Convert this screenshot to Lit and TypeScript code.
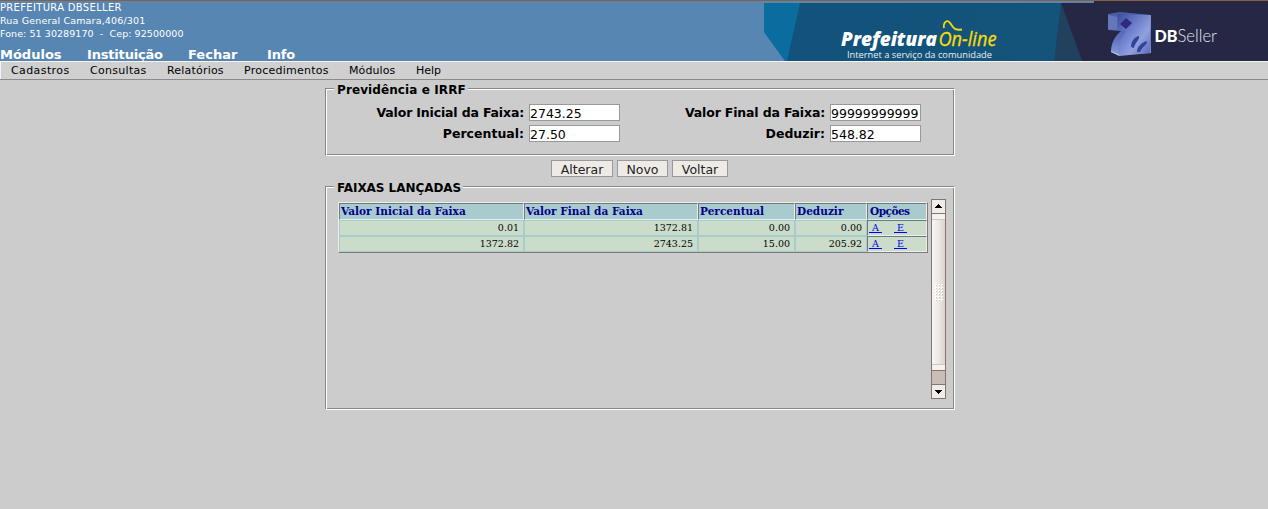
import { LitElement, html, css, svg } from "lit";
import { customElement, property } from "lit/decorators.js";

@customElement("brand-banner")
class BrandBanner extends LitElement {
  static styles = css`
    :host { display: block; width: 504px; height: 60px; }
    svg { display: block; }
    .sans { font-family: "Open Sans", "Noto Sans", sans-serif; }
    .round { font-family: Lato, sans-serif; }
  `;
  render() {
    return html`<svg width="504" height="60" viewBox="764 1 504 60">
      <defs>
        <linearGradient id="face" x1="0" y1="0" x2="1" y2="1">
          <stop offset="0" stop-color="#3d4a9c" />
          <stop offset="0.4" stop-color="#6f80cc" />
          <stop offset="0.65" stop-color="#90a1e0" />
          <stop offset="1" stop-color="#5666b6" />
        </linearGradient>
        <linearGradient id="side" x1="0" y1="0" x2="0" y2="1">
          <stop offset="0" stop-color="#4a5aab" />
          <stop offset="0.6" stop-color="#5f70be" />
          <stop offset="1" stop-color="#8d9ddd" />
        </linearGradient>
        <linearGradient id="mid" x1="0" x2="1">
          <stop offset="0" stop-color="#12527b" />
          <stop offset="0.85" stop-color="#14537a" />
          <stop offset="1" stop-color="#12587f" />
        </linearGradient>
      </defs>
      <rect x="764" y="3" width="330" height="58" fill="url(#mid)" />
      <path d="M764 3H800L787 61H785L764 32Z" fill="#0b6d9f" />
      <path d="M764 32L785 61H764Z" fill="#5786b3" />
      <path d="M1061 3L1082 61H1054Z" fill="#21415f" />
      <path d="M1061 3H1094V1H1268V61H1082Z" fill="#262745" />
      <text class="sans" x="841" y="45.700" font-size="19" font-weight="800" font-style="italic" fill="#fff"
        textLength="96" lengthAdjust="spacingAndGlyphs">Prefeitura</text>
      <text class="sans" x="938.5" y="45.700" font-size="19.500" font-style="italic" fill="#f5dc0b" stroke="#f5dc0b" stroke-width=".3"
        textLength="58" lengthAdjust="spacingAndGlyphs">On-line</text>
      <path d="M944 28C943 23 947 18.500 950 23C953 26 953 31 962 29.500" fill="none" stroke="#f0d80e" stroke-width="1.800" />
      <text class="sans" x="847" y="57.500" font-size="9.500" fill="#e9f0f5"
        textLength="145" lengthAdjust="spacingAndGlyphs">Internet a serviço da comunidade</text>
      <path d="M1108 14L1120 12L1151 15V53L1119 56L1111 52C1111 43 1115 36 1121 31L1108 30Z" fill="url(#side)" />
      <path d="M1118 14L1151 15L1150 53L1119 55C1117 46 1121 38 1126 31L1118 30Z" fill="url(#face)" />
      <path d="M1126 18L1132 23L1126 29L1120 24Z" fill="#2f2a80" />
      <path d="M1108 15L1117 17V30L1108 29Z" fill="#6676bb" />
      <path d="M1131 47C1131 42 1134 37 1139 36C1140 40 1135 42 1134 48ZM1137 52C1137 47 1141 43 1147 41C1147 46 1142 46 1140 52Z" fill="#34439a" />
      <path d="M1111 51.500L1119 55" stroke="#bac4f4" stroke-width="1" />
      <text class="round" x="1154.500" y="42" font-size="17" font-weight="900" fill="#fff"
        textLength="23" lengthAdjust="spacingAndGlyphs">DB</text>
      <text class="round" x="1177.500" y="42" font-size="17.500" font-weight="300" fill="#e3e3ef"
        textLength="39.500" lengthAdjust="spacingAndGlyphs">Seller</text>
    </svg>`;
  }
}

@customElement("scroll-bar")
class ScrollBar extends LitElement {
  static styles = css`
    :host { display: flex; flex-direction: column; box-sizing: border-box; width: 15px; height: 200px;
      border: 1px solid #82756d; background: #c9beb5; }
    .btn { height: 14px; box-sizing: border-box; background: #f0ece8; }
    .up { border-bottom: 1px solid #82756d; }
    .down { border-top: 1px solid #82756d; }
    .thumb { height: 157px; box-sizing: border-box; border-bottom: 1px solid #82756d;
      background: linear-gradient(90deg, #f8f6f4, #ece8e4 50%, #dbd4cd); }
    .track { flex: 1; }
    svg { display: block; }
  `;
  render() {
    const dots = [];
    for (let r = 0; r < 6; r++) for (let c = 0; c < 3; c++)
      dots.push(svg`<rect x=${3 + c * 3} y=${70 + r * 3} width="2" height="2" fill="#fff"/><rect x=${4 + c * 3} y=${71 + r * 3} width="1" height="1" fill="#cfc6be"/>`);
    return html`
      <div class="btn up"><svg width="13" height="13"><path d="M6 4h1v1h1v1h1v1h1v1H3V7h1V6h1V5h1z" fill="#000" /></svg></div>
      <div class="thumb"><svg width="13" height="156">
        <rect width="13" height="5" fill="#f4f1ee" /><rect y="5" width="13" height="1" fill="#cfc8c1" />
        ${dots}
        <rect y="150" width="13" height="1" fill="#cfc8c1" /><rect y="151" width="13" height="5" fill="#f4f1ee" />
      </svg></div>
      <div class="track"></div>
      <div class="btn down"><svg width="13" height="13"><path d="M3 5h7v1H9v1H8v1H7v1H6V8H5V7H4V6H3z" fill="#000" /></svg></div>`;
  }
}

@customElement("group-box")
class GroupBox extends LitElement {
  @property() heading = "";
  static styles = css`
    :host { display: block; }
    .box { box-sizing: border-box; height: 100%; display: grid; grid-template: 14px 1fr / 9px auto 1fr; }
    .tl, .tr { height: 8px; align-self: end; border: 0 solid #fff; border-top: 1px solid #87877f; box-sizing: border-box; }
    .tl { border-left: 1px solid #87877f; box-shadow: inset 1px 1px #fff; }
    .tr { border-right: 1px solid #fff; box-shadow: inset 0 1px #fff, inset -1px 0 #87877f; }
    .legend { font: bold 12px/16px "DejaVu Sans", sans-serif; letter-spacing: var(--legend-spacing, .1px); padding: 0 2px 0 3px; white-space: nowrap; }
    .body { grid-column: 1 / 4; box-sizing: border-box; border-left: 1px solid #87877f; border-right: 1px solid #fff;
      border-bottom: 1px solid #fff; box-shadow: inset 1px 0 #fff, inset -1px -1px #87877f; min-height: 0; }
  `;
  render() {
    return html`<div class="box"><div class="tl"></div><div class="legend">${this.heading}</div><div class="tr"></div>
      <div class="body"><slot></slot></div></div>`;
  }
}

@customElement("app-root")
class AppRoot extends LitElement {
  static styles = css`
    :host { display: block; width: 1268px; height: 509px; overflow: hidden; background: #ccc; color: #000;
      font-family: "DejaVu Sans", sans-serif; }
    * { box-sizing: border-box; }
    header { height: 61px; display: flex; justify-content: space-between; background: #5786b3; border-top: 1px solid #89603f; color: #fff; }
    .org { font-size: 9.500px; line-height: 13px; white-space: pre; }
    .o0 { font-size: 10px; letter-spacing: .32px; } .o1 { letter-spacing: .16px; } .o2 { letter-spacing: .07px; }
    .modules { display: flex; font: bold 13px/15px "DejaVu Sans", sans-serif; margin-top: 7px; }
    .m1 { width: 87px; } .m2 { width: 101px; letter-spacing: -.18px; } .m3 { width: 79px; } .m4 { letter-spacing: -.2px; }
    nav { height: 19px; display: flex; padding-left: 10px; border-bottom: 1px solid #8b8b8b;
      box-shadow: inset 1px 1px #f4f4f4; background: #d0d0d0; font-size: 11px; line-height: 20px; white-space: nowrap; }
    .n0 { width: 79px; margin-left: 1px; letter-spacing: .4px; } .n1 { width: 77px; letter-spacing: .3px; } .n2 { width: 77px; letter-spacing: .2px; }
    .n3 { width: 105px; letter-spacing: .25px; } .n4 { width: 67px; letter-spacing: .1px; }
    main { width: 630px; margin: 2px 0 0 325px; }
    .form { height: 74px; }
    .fields { display: grid; grid-template-columns: 198px 91px 200px 91px; column-gap: 5px; row-gap: 4px; padding-top: 8px;
      grid-auto-rows: 17px; }
    label { font: bold 12.500px/17px "DejaVu Sans", sans-serif; text-align: right; white-space: nowrap; }
    .long { letter-spacing: -.16px; }
    input { width: 91px; height: 17px; margin: 0; padding: 2px 0 0; border: 1px solid #999; background: #fff; border-radius: 0;
      font: 12.500px/14px "DejaVu Sans", sans-serif; color: #000; outline: 0; }
    .actions { display: flex; gap: 4px; margin: 4px 0 3px 226px; }
    button { height: 17px; padding: 1px 0 0; border: 1px solid #999; background: #eeebe7; border-radius: 0;
      font: 12.500px/15px "DejaVu Sans", sans-serif; color: #222; }
    .b0 { width: 62px; } .b1 { width: 51px; } .b2 { width: 56px; }
    .list { height: 230px; --legend-spacing: -.05px; }
    .pane { display: flex; padding: 5px 0 0 12px; gap: 3px; }
    .grid { display: grid; grid-template-columns: 185px 174px 97px 72px 60px; grid-template-rows: 17px 16px 16px;
      width: 590px; height: 51px; margin-top: 3px; border: 1px solid #7b7b7b; border-top-color: #eee; border-left-color: #eee; background: #a8cccc; }
    .th { border: 1px solid #6b7b7b; border-right-color: #eee; border-bottom-color: #dff0f0;
      background: #a9cbcd; color: #00008b; font: bold 10.500px/15px "DejaVu Serif", serif; letter-spacing: .03px; padding-left: 1px; white-space: nowrap; }
    .th4 { letter-spacing: -.5px; padding-left: 2px; }
    .td { margin: 1px; background: #ccdccb; font: 9.500px/13px "DejaVu Serif", serif; text-align: right; padding-right: 4px; white-space: nowrap; }
    .opt { margin: 0; border: 1px solid #6b7b7b; border-right-color: #eee; border-bottom-color: #eee; text-align: left; display: flex; gap: 12px; padding: 0 0 0 1px; }
    a { color: #00e; text-decoration: underline; white-space: pre; width: 13px; }
  `;
  private rows = [["0.01", "1372.81", "0.00", "0.00"], ["1372.82", "2743.25", "15.00", "205.92"]];
  render() {
    return html`
      <header>
        <div>
          <div class="org"><span class="o0">PREFEITURA DBSELLER</span>
<span class="o1">Rua General Camara,406/301</span>
<span class="o2">Fone: 51 30289170  -  Cep: 92500000</span></div>
          <div class="modules">${["Módulos", "Instituição", "Fechar", "Info"].map((t, i) => html`<span class="m${i + 1}">${t}</span>`)}</div>
        </div>
        <brand-banner></brand-banner>
      </header>
      <nav>${["Cadastros", "Consultas", "Relatórios", "Procedimentos", "Módulos", "Help"].map((t, i) => html`<span class="n${i}">${t}</span>`)}</nav>
      <main>
        <group-box class="form" heading="Previdência e IRRF"><div class="fields">
          <label class="long">Valor Inicial da Faixa:</label><input .value=${"2743.25"}>
          <label class="long">Valor Final da Faixa:</label><input .value=${"99999999999"}>
          <label>Percentual:</label><input .value=${"27.50"}>
          <label>Deduzir:</label><input .value=${"548.82"}>
        </div></group-box>
        <div class="actions">${["Alterar", "Novo", "Voltar"].map((t, i) => html`<button class="b${i}">${t}</button>`)}</div>
        <group-box class="list" heading="FAIXAS LANÇADAS"><div class="pane">
          <div class="grid">
            ${["Valor Inicial da Faixa", "Valor Final da Faixa", "Percentual", "Deduzir", "Opções"].map((t, i) => html`<div class="th th${i}">${t}</div>`)}
            ${this.rows.map((r) => html`${r.map((v) => html`<div class="td">${v}</div>`)}<div class="td opt"><a> A </a><a> E </a></div>`)}
          </div>
          <scroll-bar></scroll-bar>
        </div></group-box>
      </main>`;
  }
}
